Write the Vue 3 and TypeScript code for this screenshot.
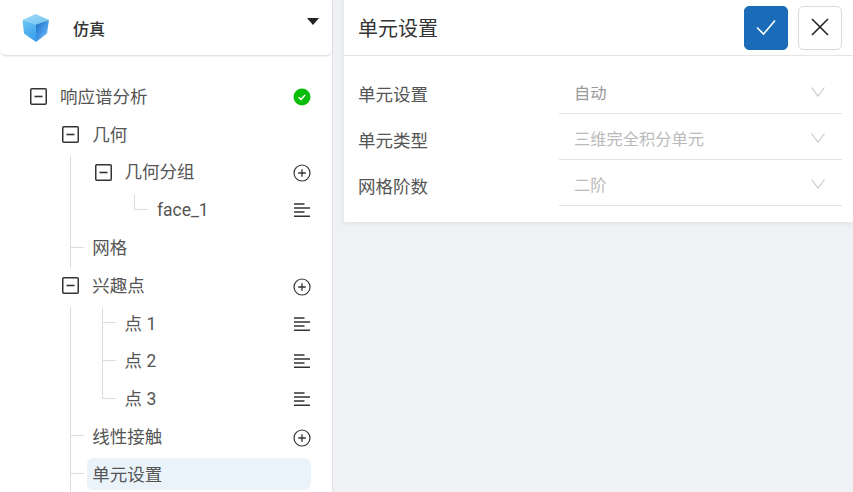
<script setup lang="ts">
interface Row {
  label: string
  level: number
  toggle?: boolean
  action?: 'ok' | 'add' | 'list'
  selected?: boolean
}

const rows: Row[] = [
  { label: '响应谱分析', level: 0, toggle: true, action: 'ok' },
  { label: '几何', level: 1, toggle: true },
  { label: '几何分组', level: 2, toggle: true, action: 'add' },
  { label: 'face_1', level: 3, action: 'list' },
  { label: '网格', level: 1 },
  { label: '兴趣点', level: 1, toggle: true, action: 'add' },
  { label: '点 1', level: 2, action: 'list' },
  { label: '点 2', level: 2, action: 'list' },
  { label: '点 3', level: 2, action: 'list' },
  { label: '线性接触', level: 1, action: 'add' },
  { label: '单元设置', level: 1, selected: true },
]

const guides = [
  { left: 70, top: 78, width: 1, height: 112 },
  { left: 70, top: 229, width: 1, height: 185 },
  { left: 134, top: 116, width: 1, height: 16 },
  { left: 134, top: 131, width: 14, height: 1 },
  { left: 70, top: 169, width: 14, height: 1 },
  { left: 102, top: 230, width: 1, height: 91 },
  { left: 102, top: 244, width: 14, height: 1 },
  { left: 102, top: 282, width: 14, height: 1 },
  { left: 102, top: 320, width: 14, height: 1 },
  { left: 70, top: 357, width: 14, height: 1 },
  { left: 70, top: 395, width: 14, height: 1 },
]

const fields = [
  { label: '单元设置', value: '自动', dim: false },
  { label: '单元类型', value: '三维完全积分单元', dim: true },
  { label: '网格阶数', value: '二阶', dim: true },
]

function guideStyle(g: { left: number; top: number; width: number; height: number }) {
  return { left: `${g.left}px`, top: `${g.top}px`, width: `${g.width}px`, height: `${g.height}px` }
}
function rowStyle(r: Row) {
  return { paddingLeft: `${30 + r.level * 32.3}px` }
}
</script>

<template>
  <div class="page">
    <aside class="side">
      <header class="side-head">
        <svg class="cube" width="30" height="30" viewBox="0 0 30 30">
          <defs>
            <linearGradient id="cubeTop" x1="0" y1="0" x2="1" y2="1">
              <stop offset="0" stop-color="#a5dcf7" />
              <stop offset="1" stop-color="#6cc0ef" />
            </linearGradient>
            <linearGradient id="cubeLeft" x1="0" y1="0" x2="0.4" y2="1">
              <stop offset="0" stop-color="#6cc6f3" />
              <stop offset="1" stop-color="#3ba3ec" />
            </linearGradient>
            <linearGradient id="cubeRight" x1="0" y1="0" x2="1" y2="1">
              <stop offset="0" stop-color="#1668c2" />
              <stop offset="0.55" stop-color="#4c9eea" />
              <stop offset="1" stop-color="#8ccaf7" />
            </linearGradient>
          </defs>
          <polygon points="14.5,1 28,7 15,11.5 1.5,7" fill="url(#cubeTop)" />
          <polygon points="1.5,7 15,11.5 15,29 3,20.5" fill="url(#cubeLeft)" />
          <polygon points="28,7 15,11.5 15,29 26,20.5" fill="url(#cubeRight)" />
        </svg>
        <span class="side-title">仿真</span>
        <span class="caret"></span>
      </header>
      <div class="tree">
        <i v-for="(g, i) in guides" :key="i" class="guide" :style="guideStyle(g)"></i>
        <div v-for="r in rows" :key="r.label" class="row" :style="rowStyle(r)">
          <span class="toggle-slot">
            <svg v-if="r.toggle" width="17" height="17" viewBox="0 0 17 17">
              <rect x="0.75" y="0.75" width="15.5" height="15.5" rx="1" fill="none" stroke="#333" stroke-width="1.5" />
              <rect x="4.5" y="7.7" width="8" height="1.6" fill="#333" />
            </svg>
          </span>
          <span class="label" :class="{ selected: r.selected }">{{ r.label }}</span>
          <span class="act">
            <svg v-if="r.action === 'ok'" width="18" height="18" viewBox="0 0 18 18">
              <circle cx="9" cy="9" r="8.5" fill="#0bbd0b" />
              <path d="M5.6 9.2 L8 11.4 L12.2 6.9" fill="none" stroke="#fff" stroke-width="1.5" />
            </svg>
            <svg v-else-if="r.action === 'add'" class="add" width="18" height="18" viewBox="0 0 18 18">
              <circle cx="9" cy="9" r="8" fill="none" stroke="#333" stroke-width="1.2" />
              <path d="M9 5.2 V12.8 M5.2 9 H12.8" fill="none" stroke="#333" stroke-width="1.3" />
            </svg>
            <svg v-else-if="r.action === 'list'" width="16" height="14" viewBox="0 0 16 14">
              <path d="M0 1 H10.5 M0 5 H16 M0 9 H10.5 M0 13.3 H16" fill="none" stroke="#333" stroke-width="1.4" />
            </svg>
          </span>
        </div>
      </div>
    </aside>
    <main class="main">
      <section class="panel">
        <header class="panel-head">
          <h1 class="panel-title">单元设置</h1>
          <button class="btn primary" type="button" aria-label="确认">
            <svg width="22" height="22" viewBox="0 0 22 22">
              <path d="M2 11.5 L8.5 18 L20 4.5" fill="none" stroke="#fff" stroke-width="1.6" />
            </svg>
          </button>
          <button class="btn" type="button" aria-label="关闭">
            <svg width="18" height="18" viewBox="0 0 18 18">
              <path d="M1 1 L17 17 M17 1 L1 17" fill="none" stroke="#222" stroke-width="1.6" />
            </svg>
          </button>
        </header>
        <div class="form">
          <div v-for="f in fields" :key="f.label" class="field">
            <span class="field-label">{{ f.label }}</span>
            <div class="select">
              <span class="value" :class="{ dim: f.dim }">{{ f.value }}</span>
              <svg class="chev" width="14" height="10" viewBox="0 0 14 10">
                <path d="M0.5 0.5 L7 9 L13.5 0.5" fill="none" stroke="#c8c8c8" stroke-width="1.1" />
              </svg>
            </div>
          </div>
        </div>
      </section>
    </main>
  </div>
</template>

<style>
html, body { margin: 0; padding: 0; }
</style>

<style scoped>
.page {
  display: flex;
  width: 853px;
  height: 492px;
  overflow: hidden;
  background: #f0f1f5;
  font-family: Roboto, "Noto Sans CJK SC", sans-serif;
}
.side {
  width: 332px;
  flex: none;
  background: #fff;
  border-right: 1px solid #dfe1e5;
}
.side-head {
  height: 54px;
  margin-top: 1px;
  display: flex;
  align-items: center;
  padding: 0 13px 0 21px;
  border-radius: 0 0 6px 6px;
  border-bottom: 1px solid #e2e2e2;
  box-shadow: 0 1px 2px rgba(0, 0, 0, 0.06);
  box-sizing: content-box;
  background: #fff;
}
.cube { flex: none; }
.side-title {
  margin-left: 22px;
  font-size: 16px;
  font-weight: 500;
  color: #333;
  flex: 1;
}
.caret {
  width: 0;
  height: 0;
  border-left: 6px solid transparent;
  border-right: 6px solid transparent;
  border-top: 7px solid #222;
  margin-bottom: 14px;
}
.tree {
  position: relative;
  padding-top: 22px;
}
.guide {
  position: absolute;
  margin-top: 22px;
  background: #dcdcdc;
}
.row {
  position: relative;
  height: 37.8px;
  display: flex;
  align-items: center;
  padding-right: 21px;
  box-sizing: border-box;
}
.toggle-slot {
  width: 17px;
  height: 17px;
  flex: none;
  display: block;
}
.toggle-slot svg { display: block; }
.label {
  margin-left: 13px;
  margin-bottom: 2px;
  padding-top: 2px;
  font-size: 17.5px;
  color: #555;
  line-height: 30px;
  flex: 1;
}
.label.selected {
  margin-left: 8px;
  padding-left: 5px;
  border-radius: 6px;
  background: #eaf3f9;
  position: relative;
}
.act {
  width: 18px;
  flex: none;
  display: flex;
  justify-content: center;
}
.add { position: relative; top: 1px; }
.row:last-child .act { display: none; }
.main {
  flex: 1;
  padding-left: 11px;
}
.panel {
  background: #fff;
  height: 222px;
  box-shadow: 0 1px 6px rgba(0, 0, 0, 0.08);
}
.panel-head {
  height: 55px;
  display: flex;
  align-items: center;
  gap: 10px;
  padding: 0 11px 0 14px;
  border-bottom: 1px solid #e5e5e5;
}
.panel-title {
  margin: 0;
  flex: 1;
  font-size: 20px;
  font-weight: 400;
  color: #333;
}
.btn {
  width: 44px;
  height: 44px;
  padding: 0 0 2px;
  display: flex;
  align-items: center;
  justify-content: center;
  background: #fff;
  border: 1px solid #dcdcdc;
  border-radius: 5px;
  box-sizing: border-box;
}
.btn.primary {
  background: #1a6bb8;
  border-color: #1a6bb8;
}
.form {
  padding: 12px 11px 0 14px;
}
.field {
  height: 46px;
  display: flex;
  align-items: center;
}
.field-label {
  width: 201px;
  flex: none;
  font-size: 17.5px;
  color: #555;
  padding-top: 4px;
}
.select {
  flex: 1;
  height: 46px;
  display: flex;
  align-items: center;
  justify-content: space-between;
  padding: 2px 17px 0 15px;
  border-bottom: 1px solid #e2e2e2;
  box-sizing: border-box;
}
.value {
  font-size: 16.25px;
  color: #999;
}
.value.dim { color: #bbb; }
</style>
